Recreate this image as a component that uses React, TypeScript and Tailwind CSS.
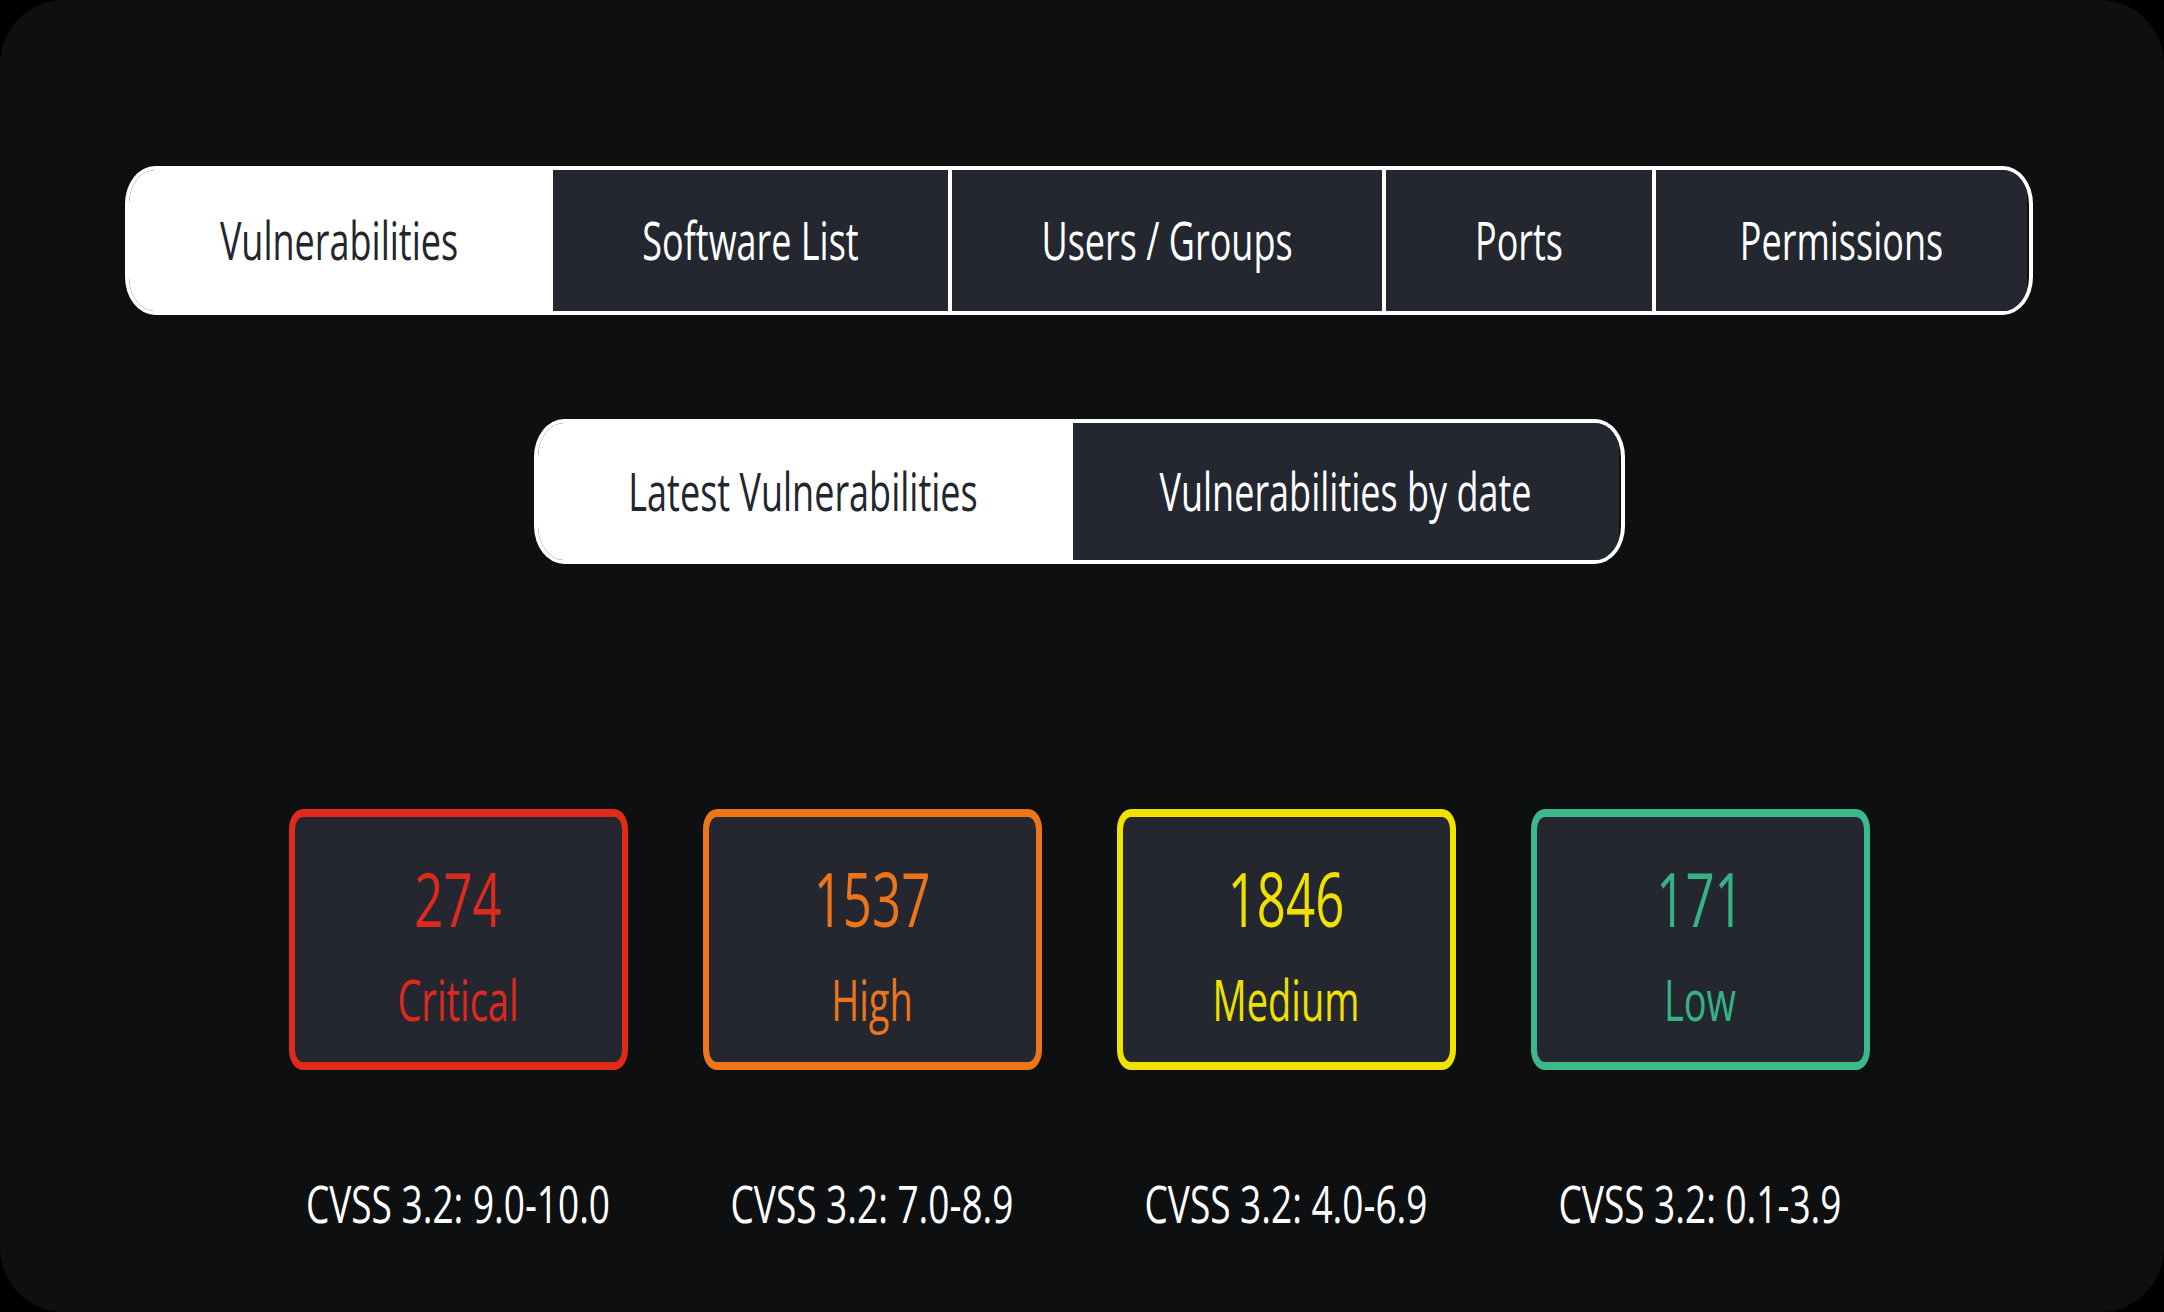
import React from "react";

const topTabs = [
  { label: "Vulnerabilities", w: "w-[420px]", active: true },
  { label: "Software List", w: "w-[399px]", active: false },
  { label: "Users / Groups", w: "w-[434px]", active: false },
  { label: "Ports", w: "w-[270px]", active: false },
  { label: "Permissions", w: "w-[375px]", active: false },
];

const subTabs = [
  { label: "Latest Vulnerabilities", w: "w-[531px]", active: true },
  { label: "Vulnerabilities by date", w: "w-[550px]", active: false },
];

const cards = [
  { count: "274", label: "Critical", range: "CVSS 3.2: 9.0-10.0", border: "border-[#e02a1a]", text: "text-[#dd2a1c]" },
  { count: "1537", label: "High", range: "CVSS 3.2: 7.0-8.9", border: "border-[#ee7618]", text: "text-[#ec7419]" },
  { count: "1846", label: "Medium", range: "CVSS 3.2: 4.0-6.9", border: "border-[#f1e200]", text: "text-[#efe000]" },
  { count: "171", label: "Low", range: "CVSS 3.2: 0.1-3.9", border: "border-[#3bb98a]", text: "text-[#37b285]" },
];

function Tab({ label, w, active, first }: { label: string; w: string; active: boolean; first: boolean }) {
  return (
    <div
      className={`${w} h-full flex items-center justify-center ${first ? "" : "border-l-4 border-white"} ${
        active ? "bg-white text-[#23262e]" : "bg-[#242730] text-white"
      }`}
    >
      <span className="block text-[36px] leading-none scale-y-[1.48]">{label}</span>
    </div>
  );
}

export default function App() {
  return (
    <div className="w-[2164px] h-[1312px] bg-black" style={{ fontFamily: '"Open Sans", "Noto Sans", sans-serif' }}>
      <div className="w-full h-full rounded-[64px] bg-[#0e0f11] pl-[126px] pt-[166px]">
        <div className="w-[1906px] flex flex-col items-center">
          <div className="w-[1908px] h-[149px] flex border-4 border-white rounded-[30px/38px] overflow-hidden">
            {topTabs.map((t, i) => (
              <Tab key={t.label} {...t} first={i === 0} />
            ))}
          </div>

          <div className="mt-[104px] w-[1091px] h-[145px] flex border-4 border-white rounded-[30px/38px] overflow-hidden">
            {subTabs.map((t, i) => (
              <Tab key={t.label} {...t} first={i === 0} />
            ))}
          </div>

          <div className="mt-[245px] flex gap-[75px]">
            {cards.map((c) => (
              <div key={c.label} className="w-[339px] flex flex-col items-center">
                <div
                  className={`w-[339px] h-[261px] border-x-[6px] border-y-[8px] ${c.border} rounded-[14px/20px] bg-[#242730] flex flex-col items-center pt-[56px] ${c.text}`}
                >
                  <span className="block text-[51px] leading-none scale-y-[1.48]">{c.count}</span>
                  <span className="block mt-[56px] text-[38px] leading-none scale-y-[1.48]">{c.label}</span>
                </div>
                <span className="block mt-[114px] text-[37px] leading-none font-medium text-white scale-y-[1.4]">
                  {c.range}
                </span>
              </div>
            ))}
          </div>
        </div>
      </div>
    </div>
  );
}
